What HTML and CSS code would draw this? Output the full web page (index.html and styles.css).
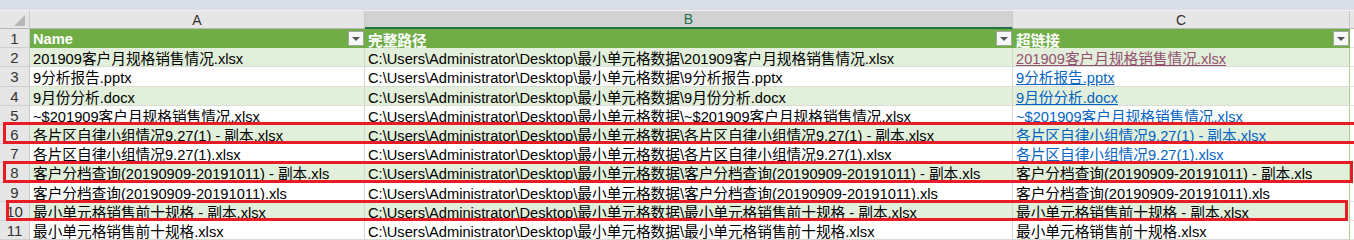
FILE: index.html
```html
<!DOCTYPE html>
<html>
<head>
<meta charset="utf-8">
<link rel="stylesheet" href="styles.css">
</head>
<body>
<div class="top"></div>
<div class="sheet">
  <div class="corner"><span class="tri"></span></div>
  <div class="colh">A</div>
  <div class="colh sel">B</div>
  <div class="colh">C</div>
  <div class="colh rest"></div>

  <div class="rowh">1</div>
  <div class="th">Name<span class="dd"></span></div>
  <div class="th">完整路径<span class="dd"></span></div>
  <div class="th">超链接<span class="dd"></span></div>
  <div class="cell rest"></div>

  <div class="rowh">2</div>
  <div class="cell band">201909客户月规格销售情况.xlsx</div>
  <div class="cell band">C:\Users\Administrator\Desktop\最小单元格数据\201909客户月规格销售情况.xlsx</div>
  <div class="cell band lastc"><span class="link visited">201909客户月规格销售情况.xlsx</span></div>
  <div class="cell rest"></div>

  <div class="rowh">3</div>
  <div class="cell">9分析报告.pptx</div>
  <div class="cell">C:\Users\Administrator\Desktop\最小单元格数据\9分析报告.pptx</div>
  <div class="cell lastc"><span class="link">9分析报告.pptx</span></div>
  <div class="cell rest"></div>

  <div class="rowh">4</div>
  <div class="cell band">9月份分析.docx</div>
  <div class="cell band">C:\Users\Administrator\Desktop\最小单元格数据\9月份分析.docx</div>
  <div class="cell band lastc"><span class="link">9月份分析.docx</span></div>
  <div class="cell rest"></div>

  <div class="rowh">5</div>
  <div class="cell">~$201909客户月规格销售情况.xlsx</div>
  <div class="cell">C:\Users\Administrator\Desktop\最小单元格数据\~$201909客户月规格销售情况.xlsx</div>
  <div class="cell lastc"><span class="link">~$201909客户月规格销售情况.xlsx</span></div>
  <div class="cell rest"></div>

  <div class="rowh">6</div>
  <div class="cell band">各片区自律小组情况9.27(1) - 副本.xlsx</div>
  <div class="cell band">C:\Users\Administrator\Desktop\最小单元格数据\各片区自律小组情况9.27(1) - 副本.xlsx</div>
  <div class="cell band lastc"><span class="link">各片区自律小组情况9.27(1) - 副本.xlsx</span></div>
  <div class="cell rest"></div>

  <div class="rowh">7</div>
  <div class="cell">各片区自律小组情况9.27(1).xlsx</div>
  <div class="cell">C:\Users\Administrator\Desktop\最小单元格数据\各片区自律小组情况9.27(1).xlsx</div>
  <div class="cell lastc"><span class="link">各片区自律小组情况9.27(1).xlsx</span></div>
  <div class="cell rest"></div>

  <div class="rowh">8</div>
  <div class="cell band">客户分档查询(20190909-20191011) - 副本.xls</div>
  <div class="cell band">C:\Users\Administrator\Desktop\最小单元格数据\客户分档查询(20190909-20191011) - 副本.xls</div>
  <div class="cell band lastc">客户分档查询(20190909-20191011) - 副本.xls</div>
  <div class="cell rest"></div>

  <div class="rowh">9</div>
  <div class="cell">客户分档查询(20190909-20191011).xls</div>
  <div class="cell">C:\Users\Administrator\Desktop\最小单元格数据\客户分档查询(20190909-20191011).xls</div>
  <div class="cell lastc">客户分档查询(20190909-20191011).xls</div>
  <div class="cell rest"></div>

  <div class="rowh">10</div>
  <div class="cell band">最小单元格销售前十规格 - 副本.xlsx</div>
  <div class="cell band">C:\Users\Administrator\Desktop\最小单元格数据\最小单元格销售前十规格 - 副本.xlsx</div>
  <div class="cell band lastc">最小单元格销售前十规格 - 副本.xlsx</div>
  <div class="cell rest"></div>

  <div class="rowh">11</div>
  <div class="cell">最小单元格销售前十规格.xlsx</div>
  <div class="cell">C:\Users\Administrator\Desktop\最小单元格数据\最小单元格销售前十规格.xlsx</div>
  <div class="cell lastc">最小单元格销售前十规格.xlsx</div>
  <div class="cell rest"></div>
</div>
<div class="mark m1"></div>
<div class="mark m2"></div>
<div class="mark m3"></div>
</body>
</html>
```

FILE: styles.css
```css
html, body {
  margin: 0;
  padding: 0;
  background: #ffffff;
  overflow: hidden;
  width: 1354px;
  height: 240px;
  position: relative;
  font-family: "Liberation Sans", "Noto Sans CJK SC", sans-serif;
  font-size: 14.67px;
  color: #000;
}

.top {
  height: 10px;
  background: #d8dde6;
  border-bottom: 1px solid #f2f2f2;
}

.sheet {
  display: grid;
  grid-template-columns: 30px 335px 648px 337px 4px;
  grid-template-rows: 18px;
  grid-auto-rows: 19.2px;
}

.sheet > div {
  box-sizing: border-box;
  white-space: nowrap;
  overflow: hidden;
}

.corner {
  background: #e6e6e6;
  border-right: 1px solid #c8c8c8;
  border-bottom: 1px solid #b8b8b8;
  position: relative;
}
.tri {
  position: absolute;
  right: 4px;
  bottom: 2px;
  width: 0;
  height: 0;
  border-left: 11px solid transparent;
  border-bottom: 11px solid #b8b8b8;
}

.colh {
  background: #e6e6e6;
  border-right: 1px solid #c8c8c8;
  border-bottom: 1px solid #b8b8b8;
  text-align: center;
  color: #333;
  font-size: 14px;
  line-height: 18px;
}
.colh.sel {
  background: #d2d2d2;
  color: #217346;
  border-bottom: 2px solid #217346;
  line-height: 17px;
}
.colh.rest {
  background: #e6e6e6;
  border-right: none;
}

.rowh {
  background: #e6e6e6;
  border-right: 1px solid #c8c8c8;
  border-bottom: 1px solid #cfcfcf;
  text-align: center;
  color: #333;
  font-size: 15px;
  display: flex;
  align-items: center;
  justify-content: center;
  padding-top: 1px;
}

.th {
  background: #70ad47;
  color: #ffffff;
  font-weight: bold;
  display: flex;
  align-items: center;
  justify-content: space-between;
  padding-left: 3px;
  padding-top: 1px;
}

.dd {
  width: 16px;
  height: 15px;
  box-sizing: border-box;
  background: #f7f7f7;
  border: 1px solid #a6a6a6;
  margin-right: 1px;
  margin-top: -1px;
  display: flex;
  align-items: center;
  justify-content: center;
}
.dd::after {
  content: "";
  width: 0;
  height: 0;
  border-left: 4px solid transparent;
  border-right: 4px solid transparent;
  border-top: 4px solid #555;
}

.cell {
  background: #ffffff;
  border-right: 1px solid #d4d4d4;
  border-bottom: 1px solid #d9ddd6;
  padding-left: 3px;
  display: flex;
  align-items: center;
  padding-top: 1px;
}
.cell.band {
  background: #e2efda;
}
.cell.lastc {
  border-right: 1px solid #a9d08e;
}
.cell.rest {
  background: #fff;
  border-right: none;
  border-bottom: 1px solid #e2e2e2;
}

.link {
  color: #0563c1;
  text-decoration: underline;
}
.link.visited {
  color: #954f72;
}

.mark {
  position: absolute;
  box-sizing: border-box;
  border: 3px solid #e81c24;
  pointer-events: none;
}
.m1 {
  left: 3px;
  top: 122px;
  width: 1360px;
  height: 22px;
}
.m2 {
  left: 3px;
  top: 161px;
  width: 1350px;
  height: 22px;
}
.m3 {
  left: 6px;
  top: 200px;
  width: 1342px;
  height: 21px;
}
```
